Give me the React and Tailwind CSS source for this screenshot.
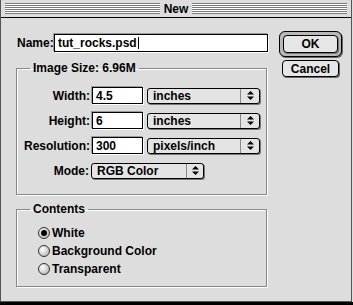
import React from 'react';

function Arrows() {
  return (
    <svg width="7" height="9" viewBox="0 0 7 9" className="block">
      <path d="M3.5 0 L7 3.5 L0 3.5 Z" fill="#000" />
      <path d="M0 5.5 L7 5.5 L3.5 9 Z" fill="#000" />
    </svg>
  );
}

function Popup({ value, width, arrowWidth }) {
  return (
    <div
      className={`flex h-[16px] rounded-[3px] border border-black bg-[#e4e4e4] shadow-[1px_1px_0_#777] ${width}`}
    >
      <span className="flex-1 truncate pl-[5px] leading-[14px]">{value}</span>
      <div className={`flex items-center justify-center border-l border-[#8a8a8a] ${arrowWidth}`}>
        <Arrows />
      </div>
    </div>
  );
}

function Field({ value, width }) {
  return (
    <div
      className={`flex h-[17px] items-center border border-black bg-white pl-[3px] shadow-[-1px_-1px_0_#9a9a9a,1px_1px_0_#fff] ${width}`}
    >
      {value}
    </div>
  );
}

function Group({ title, children, className = '' }) {
  return (
    <fieldset
      className={`w-[251px] border border-[#888] shadow-[1px_1px_0_#fff,inset_1px_1px_0_#fff] ${className}`}
    >
      <legend className="ml-[13px] px-[3px] leading-[14px]">{title}</legend>
      {children}
    </fieldset>
  );
}

function Radio({ label, checked }) {
  return (
    <div className="flex h-[17px] items-center gap-[2px]">
      <div className="flex h-[12px] w-[12px] items-center justify-center rounded-full border border-[#333] bg-[radial-gradient(circle_at_35%_35%,#ffffff,#a8a8a8)]">
        {checked && <div className="h-[6px] w-[6px] rounded-full bg-black" />}
      </div>
      <span>{label}</span>
    </div>
  );
}

const rows = [
  { label: 'Width:', value: '4.5', unit: 'inches' },
  { label: 'Height:', value: '6', unit: 'inches' },
  { label: 'Resolution:', value: '300', unit: 'pixels/inch' },
];

export default function App() {
  return (
    <div className="flex h-[305px] w-[353px] flex-col bg-[#dddddd] font-['Liberation_Sans',Arial,sans-serif] text-[12px] font-bold leading-[14px] text-black">
      <div className="flex w-[352px] flex-1 flex-col border-x border-b border-[#555]">
        {/* title bar */}
        <div className="flex h-[18px] items-center border-b border-black px-[4px]">
          <div className="h-[11px] flex-1 bg-[repeating-linear-gradient(to_bottom,#7a7a7a_0px,#7a7a7a_1px,#ffffff_1px,#ffffff_2px)]" />
          <span className="px-[4px] leading-none">New</span>
          <div className="h-[11px] flex-1 bg-[repeating-linear-gradient(to_bottom,#7a7a7a_0px,#7a7a7a_1px,#ffffff_1px,#ffffff_2px)]" />
        </div>

        <div className="flex flex-1 pl-[15px] pt-[13px]">
          <div className="w-[252px] pt-[3px]">
            <div className="flex h-[18px] items-center">
              <span className="w-[38px] pl-[1px]">Name:</span>
              <div className="flex h-[18px] w-[214px] items-center border border-black bg-white pl-[3px] shadow-[-1px_-1px_0_#9a9a9a,1px_1px_0_#fff]">
                tut_rocks.psd
                <span className="ml-[1px] inline-block h-[12px] w-[1px] bg-black" />
              </div>
            </div>

            <Group title="Image Size: 6.96M" className="mt-[9px]">
              <div className="flex flex-col gap-[8px] pb-[15px] pt-[12px]">
                {rows.map((r) => (
                  <div key={r.label} className="flex h-[17px] items-center">
                    <span className="w-[75px] pr-[2px] text-right">{r.label}</span>
                    <Field value={r.value} width="w-[51px]" />
                    <div className="ml-[4px]">
                      <Popup value={r.unit} width="w-[113px]" arrowWidth="w-[19px]" />
                    </div>
                  </div>
                ))}
                <div className="flex h-[17px] items-center">
                  <span className="w-[74px] pr-[2px] text-right">Mode:</span>
                  <Popup value="RGB Color" width="w-[113px]" arrowWidth="w-[17px]" />
                </div>
              </div>
            </Group>

            <Group title="Contents" className="mt-[7px]">
              <div className="flex flex-col gap-[1px] pb-[9px] pl-[21px] pt-[8px]">
                <Radio label="White" checked />
                <Radio label="Background Color" />
                <Radio label="Transparent" />
              </div>
            </Group>
          </div>

          <div className="ml-[11px] flex w-[63px] flex-col items-center">
            <div className="h-[26px] w-[63px] rounded-[6px] border border-black bg-[#b8b8b8] p-[3px] shadow-[1px_1px_0_#666]">
              <div className="flex h-[18px] items-center justify-center rounded-[4px] border border-black bg-[#e6e6e6] shadow-[1px_1px_0_#777]">
                OK
              </div>
            </div>
            <div className="mt-[3px] flex h-[17px] w-[57px] items-center justify-center rounded-[4px] border border-black bg-[#e6e6e6] shadow-[1px_1px_0_#666]">
              Cancel
            </div>
          </div>
        </div>
      </div>
      <div className="h-[3px] w-full bg-black" />
    </div>
  );
}
